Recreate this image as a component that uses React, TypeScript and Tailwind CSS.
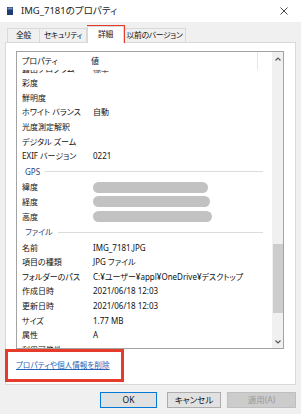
import React from "react";

type Row = { label: string; value?: string; bar?: number };

const rows1: Row[] = [
  { label: "露出プログラム", value: "標準" },
  { label: "彩度" },
  { label: "鮮明度" },
  { label: "ホワイト バランス", value: "自動" },
  { label: "光度測定解釈" },
  { label: "デジタル ズーム" },
  { label: "EXIF バージョン", value: "0221" },
];
const rowsGps: Row[] = [
  { label: "緯度", bar: 115 },
  { label: "経度", bar: 117 },
  { label: "高度", bar: 119 },
];
const rowsFile: Row[] = [
  { label: "名前", value: "IMG_7181.JPG" },
  { label: "項目の種類", value: "JPG ファイル" },
  { label: "フォルダーのパス", value: "C:¥ユーザー¥appl¥OneDrive¥デスクトップ" },
  { label: "作成日時", value: "2021/06/18 12:03" },
  { label: "更新日時", value: "2021/06/18 12:03" },
  { label: "サイズ", value: "1.77 MB" },
  { label: "属性", value: "A" },
  { label: "利用可能性" },
];

function RowView({ r }: { r: Row }) {
  return (
    <div className="flex h-[14.6px] shrink-0 items-center whitespace-nowrap">
      <div className="w-[76px] shrink-0 pl-[5px]">{r.label}</div>
      {r.bar ? (
        <div className="h-[11px] rounded-full bg-[#c2c2c2]" style={{ width: r.bar }} />
      ) : (
        <div>{r.value ?? ""}</div>
      )}
    </div>
  );
}

function Group({ title }: { title: string }) {
  return (
    <div className="flex h-[16.5px] shrink-0 items-center pl-[8px] pr-[9px] text-[#2c3e78]">
      <span>{title}</span>
      <div className="ml-[5px] h-px flex-1 bg-[#dcdcdc]" />
    </div>
  );
}

export default function App() {
  return (
    <div className="relative h-[414px] w-[301px] overflow-hidden bg-[#f0f0f0] text-[#111] font-['Noto_Sans','Noto_Sans_CJK_JP',sans-serif] [font-feature-settings:'palt']">
      {/* title bar */}
      <div className="flex h-[22px] items-center bg-white">
        <svg className="ml-[7px]" width="6" height="8" viewBox="0 0 6 8">
          <rect x="0" y="0" width="6" height="8" fill="#1f3b73" />
          <rect x="0.5" y="0.5" width="5" height="2" fill="#6f8fc2" />
        </svg>
        <span className="ml-[8px] text-[9.5px] leading-none text-[#222]">IMG_7181のプロパティ</span>
        <svg className="ml-auto mr-[13px]" width="8" height="8" viewBox="0 0 8 8">
          <path d="M0.5 0.5 L7.5 7.5 M7.5 0.5 L0.5 7.5" stroke="#333" strokeWidth="0.9" />
        </svg>
      </div>

      {/* tabs */}
      <div className="mt-[4px] flex h-[16px] items-end whitespace-nowrap pl-[7px] text-[7.8px] leading-none tracking-[-0.3px]">
        <div className="flex h-[14px] w-[33px] items-center justify-center border border-b-0 border-[#d9d9d9] bg-[#f0f0f0]">全般</div>
        <div className="flex h-[14px] w-[47px] items-center justify-center border border-b-0 border-l-0 border-[#d9d9d9] bg-[#f0f0f0]">セキュリティ</div>
        <div className="relative z-10 -mb-px flex h-[17px] w-[37px] items-center justify-center border border-b-0 border-[#d9d9d9] bg-white">詳細</div>
        <div className="flex h-[14px] w-[62px] items-center justify-center border border-b-0 border-l-0 border-[#d9d9d9] bg-[#f0f0f0]">以前のバージョン</div>
      </div>

      {/* panel */}
      <div className="ml-[5px] h-[343px] w-[291px] border border-[#d9d9d9] bg-white pl-[10px] pt-[8px]">
        <div className="flex h-[298px] w-[268px] border border-[#a3a3a3] text-[8px] leading-none">
          <div className="flex min-w-0 flex-1 flex-col">
            <div className="flex h-[18px] shrink-0 items-center">
              <div className="w-[74px] shrink-0 pl-[5px]">プロパティ</div>
              <div className="h-full w-[167px] border-r border-[#e6e6e6] pt-[5px]">値</div>
            </div>
            <div className="min-h-0 flex-1 overflow-hidden">
              <div className="-mt-[8.6px] flex flex-col">
                {rows1.map((r) => (
                  <RowView key={r.label} r={r} />
                ))}
                <Group title="GPS" />
                {rowsGps.map((r) => (
                  <RowView key={r.label} r={r} />
                ))}
                <Group title="ファイル" />
                {rowsFile.map((r) => (
                  <RowView key={r.label} r={r} />
                ))}
              </div>
            </div>
          </div>
          {/* scrollbar */}
          <div className="flex w-[11px] shrink-0 flex-col bg-[#f0f0f0]">
            <div className="flex h-[13px] items-center justify-center">
              <svg width="6" height="4" viewBox="0 0 6 4">
                <path d="M0.5 3.5 L3 1 L5.5 3.5" fill="none" stroke="#555" strokeWidth="1.1" />
              </svg>
            </div>
            <div className="flex-1">
              <div className="mx-auto mt-[179px] h-[69px] w-[10px] bg-[#cdcdcd]" />
            </div>
            <div className="flex h-[13px] items-center justify-center">
              <svg width="6" height="4" viewBox="0 0 6 4">
                <path d="M0.5 0.5 L3 3 L5.5 0.5" fill="none" stroke="#555" strokeWidth="1.1" />
              </svg>
            </div>
          </div>
        </div>
        <div className="mt-[12px] text-[7.6px] leading-[9px] text-[#2563b8] underline">プロパティや個人情報を削除</div>
      </div>

      {/* buttons */}
      <div className="mt-[7px] flex pl-[100px] text-[8.5px] leading-none">
        <div className="flex h-[16px] w-[57px] items-center justify-center border border-[#0078d7] bg-[#e1e1e1]">OK</div>
        <div className="ml-[10px] flex h-[16px] w-[54px] items-center justify-center border border-[#adadad] bg-[#e1e1e1]">キャンセル</div>
        <div className="ml-[6px] flex h-[16px] w-[69px] items-center justify-center border border-[#bfbfbf] bg-[#cccccc] text-[#9a9a9a]">適用(A)</div>
      </div>

      {/* annotations */}
      <div className="pointer-events-none absolute left-[87px] top-[25px] h-[18px] w-[38px] border-2 border-[#e63a2a]" />
      <div className="pointer-events-none absolute left-[5px] top-[349px] h-[33px] w-[119px] border-[3px] border-[#e63a2a]" />
    </div>
  );
}
